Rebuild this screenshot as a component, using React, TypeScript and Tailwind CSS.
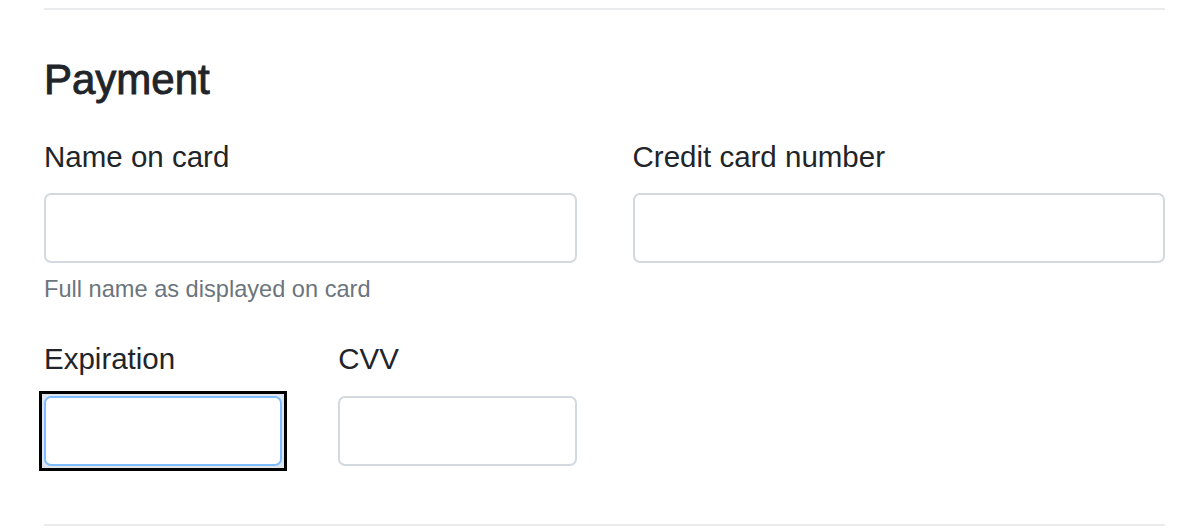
import { useState } from "react";

const FONT = "font-['Liberation_Sans',Arial,sans-serif]";

function Field({
  id,
  label,
  help,
  focused = false,
  gap = "mt-[14px]",
}: {
  id: string;
  label: string;
  help?: string;
  focused?: boolean;
  gap?: string;
}) {
  const [value, setValue] = useState("");
  const input = (
    <input
      id={id}
      type="text"
      value={value}
      onChange={(e) => setValue(e.target.value)}
      className={`block h-[70px] w-full rounded-[7px] border-2 bg-white px-5 text-[29px] text-[#495057] outline-none ${
        focused ? "border-[#80bdff]" : "border-[#d3d9df]"
      }`}
    />
  );
  return (
    <div className="flex flex-col">
      <label htmlFor={id} className="text-[29.5px] leading-[44px] text-[#212529]">
        {label}
      </label>
      <div className={gap}>
        {/* focus ring: square black outline round the glow */}
        {focused ? (
          <div className="-m-[5px] border-[3px] border-black bg-[#dfe6ee] p-[2px]">{input}</div>
        ) : (
          input
        )}
      </div>
      {help && (
        <small className="mt-[9px] text-[23.6px] leading-[34px] text-[#6c757d]">{help}</small>
      )}
    </div>
  );
}

export default function App() {
  return (
    <div className={`min-h-[528px] w-[1198px] bg-white pl-[44px] pr-[33px] ${FONT}`}>
      <hr className="mt-[8px] h-[2px] border-0 bg-[#e9ebec]" />

      <h4 className="mt-[45px] text-[42px] font-medium leading-[50px] text-[#212529] [-webkit-text-stroke:0.9px_#212529]">
        Payment
      </h4>

      {/* Row 1: name + card number */}
      <div className="mt-[30px] grid grid-cols-4 gap-x-[56px]">
        <div className="col-span-2">
          <Field id="cc-name" label="Name on card" help="Full name as displayed on card" />
        </div>
        <div className="col-span-2">
          <Field id="cc-number" label="Credit card number" />
        </div>
      </div>

      {/* Row 2: expiration + cvv */}
      <div className="mt-[31px] grid grid-cols-4 gap-x-[56px]">
        <Field id="cc-expiration" label="Expiration" focused gap="mt-[15px]" />
        <Field id="cc-cvv" label="CVV" gap="mt-[15px]" />
      </div>

      <hr className="mt-[58px] h-[2px] border-0 bg-[#e9ebec]" />
    </div>
  );
}
